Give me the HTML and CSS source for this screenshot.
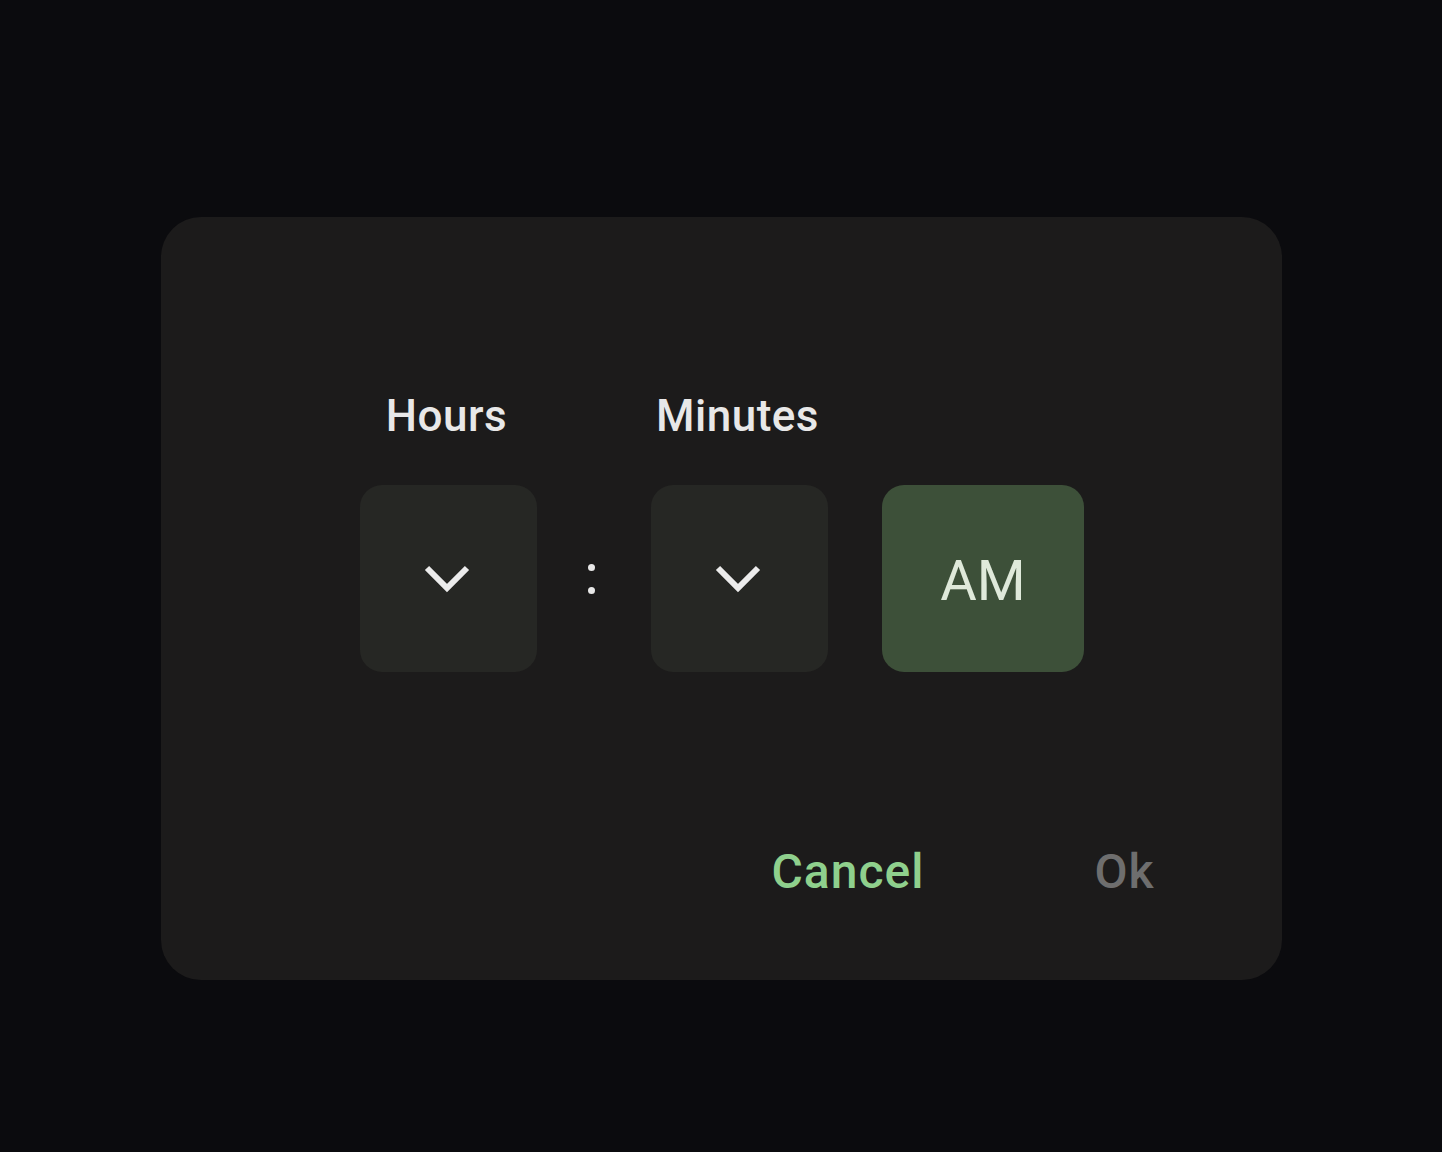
FILE: index.html
```html
<!DOCTYPE html>
<html lang="en">
<head>
    <meta charset="UTF-8" />
    <title>Time picker</title>
    <link rel="stylesheet" href="styles.css">
</head>
<body>
    <div class="dialog">
        <div class="picker">
            <div class="label">Hours</div>
            <div></div>
            <div class="label">Minutes</div>
            <div></div>
            <div></div>

            <div class="field">
                <svg width="48" height="32" viewBox="0 0 48 32"><polyline points="4,5 24,25 44,5" fill="none" stroke="#ececec" stroke-width="6"/></svg>
            </div>
            <div class="colon"><span></span><span></span></div>
            <div class="field">
                <svg width="48" height="32" viewBox="0 0 48 32"><polyline points="4,5 24,25 44,5" fill="none" stroke="#ececec" stroke-width="6"/></svg>
            </div>
            <div></div>
            <div class="ampm">AM</div>
        </div>
        <div class="actions">
            <div class="btn cancel">Cancel</div>
            <div class="btn ok">Ok</div>
        </div>
    </div>
</body>
</html>
```

FILE: styles.css
```css
*{
    margin:0;
    padding:0;
    box-sizing:border-box;
}
body{
    background:#0b0b0e;
    height:1152px;
    font-family:Roboto,"Noto Sans",sans-serif;
    overflow:hidden;
}
.dialog{
    width:1121px;
    height:763px;
    margin:217px auto 0;
    background:#1c1b1b;
    border-radius:40px;
    padding-top:173px;
}
.picker{
    display:grid;
    grid-template-columns:177px 114px 177px 54px 202px;
    grid-template-rows:52px 187px;
    row-gap:43px;
    justify-content:center;
    padding-left:2px;
}
.label{
    font-size:44px;
    line-height:52px;
    font-weight:500;
    color:#e8e8e8;
    text-align:center;
    letter-spacing:0.5px;
    padding-right:4px;
}
.field{
    background:#262724;
    border-radius:22px;
    display:flex;
    align-items:center;
    justify-content:center;
    padding-right:3px;
}
.colon{
    display:flex;
    flex-direction:column;
    align-items:center;
    justify-content:center;
    gap:16px;
    padding-right:6px;
}
.colon span{
    width:7px;
    height:7px;
    border-radius:50%;
    background:#e8e8e8;
}
.ampm{
    background:#3d5039;
    border-radius:22px;
    display:flex;
    align-items:center;
    justify-content:center;
    font-size:56px;
    padding-top:4px;
    color:#dfe9da;
}
.actions{
    display:flex;
    justify-content:flex-end;
    gap:170px;
    padding-right:127px;
    margin-top:172px;
}
.btn{
    font-size:48px;
    line-height:56px;
    font-weight:500;
    letter-spacing:1px;
}
.cancel{
    color:#8fd08d;
}
.ok{
    color:#6e6e6e;
}
```
